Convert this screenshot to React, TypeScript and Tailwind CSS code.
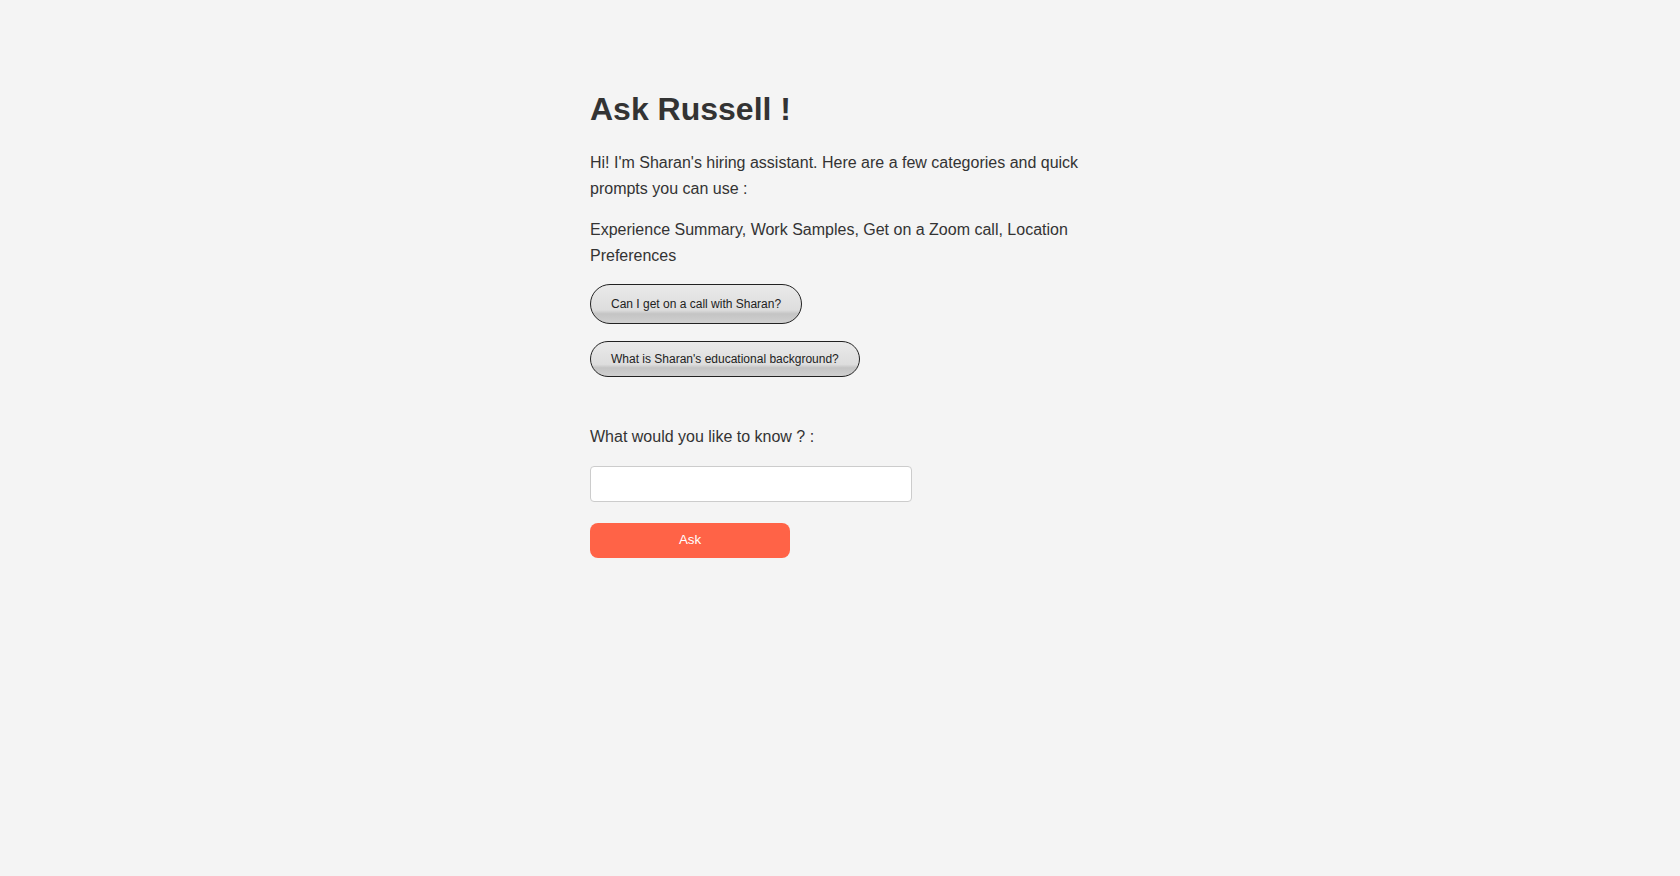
import React from "react";

const prompts = [
  { label: "Can I get on a call with Sharan?", height: "h-[40px]" },
  { label: "What is Sharan's educational background?", height: "h-[36px]" },
];

export default function App() {
  return (
    <div className="min-h-screen bg-[#f4f4f4] font-['Liberation_Sans',Arial,sans-serif] text-[#333]">
      <div className="mx-auto w-[500px] pt-[91px]">
        <h1 className="text-[32px] font-bold leading-[37px]">Ask Russell !</h1>
        <p className="mt-[22px] text-[16px] leading-[25.6px]">
          Hi! I'm Sharan's hiring assistant. Here are a few categories and quick prompts you can use :
        </p>
        <p className="mt-4 text-[16px] leading-[25.6px]">
          Experience Summary, Work Samples, Get on a Zoom call, Location Preferences
        </p>

        <div className="mt-4 flex flex-col items-start gap-[17px]">
          {prompts.map((p) => (
            <button
              key={p.label}
              className={`${p.height} rounded-full border border-[#222] bg-[linear-gradient(to_bottom,#eaeaea_0%,#dddddd_66%,#c4c4c4_76%,#d0d0d0_100%)] px-5 text-[12px] text-[#222]`}
            >
              {p.label}
            </button>
          ))}
        </div>

        <label className="mt-[47px] block text-[16px] leading-[25.6px]">What would you like to know ? :</label>
        <input
          type="text"
          className="mt-4 block h-[36px] w-[322px] rounded-[4px] border border-[#ccc] bg-white px-2 text-[14px] outline-none"
        />
        <button className="mt-[21px] block h-[35px] w-[200px] rounded-[8px] bg-[#ff6347] text-[13.33px] text-white">
          Ask
        </button>
      </div>
    </div>
  );
}
